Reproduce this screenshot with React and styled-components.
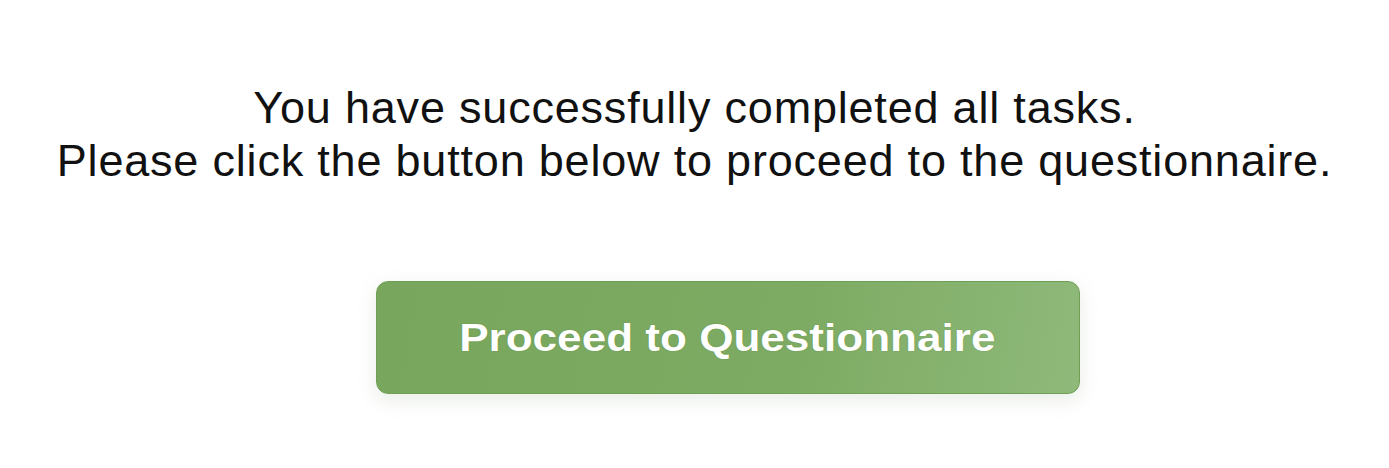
import styled, { createGlobalStyle } from "styled-components";

const Global = createGlobalStyle`
  body {
    margin: 0;
    background: #ffffff;
    font-family: "Liberation Sans", Arial, sans-serif;
  }
`;

const Page = styled.main`
  display: flex;
  flex-direction: column;
  align-items: center;
  height: 468px;
  padding-top: 81px;
  box-sizing: border-box;
`;

const Message = styled.p`
  margin: 0;
  text-align: center;
  font-size: 45px;
  line-height: 53px;
  letter-spacing: 0.8px;
  color: #111111;
`;

const ProceedButton = styled.button`
  display: flex;
  align-items: center;
  justify-content: center;
  margin-top: 94px;
  margin-left: 66px;
  width: 704px;
  height: 113px;
  padding: 0;
  border: 1px solid #6f9f55;
  border-radius: 12px;
  background: linear-gradient(100deg, #78a65c 0%, #7eab63 60%, #8eb97a 100%);
  box-shadow: 0 6px 20px rgba(120, 140, 100, 0.16);
  color: #ffffff;
  font-family: "Liberation Sans", Arial, sans-serif;
  font-weight: bold;
  font-size: 39px;
  cursor: pointer;
`;

const Label = styled.span`
  display: inline-block;
  transform: scaleX(1.13);
  text-shadow: 0 0 1px rgba(60, 110, 30, 0.6);
`;

export default function App() {
  return (
    <>
      <Global />
      <Page>
        <Message>
          You have successfully completed all tasks.
          <br />
          Please click the button below to proceed to the questionnaire.
        </Message>
        <ProceedButton>
          <Label>Proceed to Questionnaire</Label>
        </ProceedButton>
      </Page>
    </>
  );
}
